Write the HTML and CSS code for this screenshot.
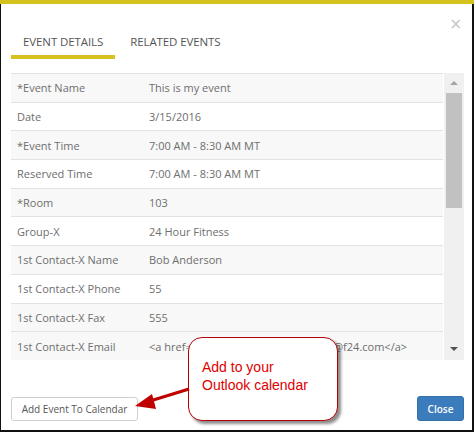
FILE: index.html
```html
<!DOCTYPE html>
<html>
<head>
<meta charset="utf-8">
<link rel="stylesheet" href="styles.css">
</head>
<body>
<div class="modal">
  <div class="topbar"></div>
  <div class="frame">
    <div class="close-row"><span class="close-x">×</span></div>
    <div class="tabs">
      <div class="tab active">EVENT DETAILS</div>
      <div class="tab">RELATED EVENTS</div>
    </div>
    <div class="table-wrap">
      <div class="rows">
        <div class="row odd"><span class="label">*Event Name</span><span class="value">This is my event</span></div>
        <div class="row"><span class="label">Date</span><span class="value">3/15/2016</span></div>
        <div class="row odd"><span class="label">*Event Time</span><span class="value">7:00 AM - 8:30 AM MT</span></div>
        <div class="row"><span class="label">Reserved Time</span><span class="value">7:00 AM - 8:30 AM MT</span></div>
        <div class="row odd"><span class="label">*Room</span><span class="value">103</span></div>
        <div class="row"><span class="label">Group-X</span><span class="value">24 Hour Fitness</span></div>
        <div class="row odd"><span class="label">1st Contact-X Name</span><span class="value">Bob Anderson</span></div>
        <div class="row"><span class="label">1st Contact-X Phone</span><span class="value">55</span></div>
        <div class="row odd"><span class="label">1st Contact-X Fax</span><span class="value">555</span></div>
        <div class="row odd"><span class="label">1st Contact-X Email</span><span class="value">&lt;a href="mailto:bob@f24.com"&gt;bob@f24.com&lt;/a&gt;</span></div>
      </div>
      <div class="scrollbar">
        <div class="sb-arrow up"></div>
        <div class="sb-thumb"></div>
        <div class="sb-arrow down"></div>
      </div>
    </div>
    <div class="footer">
      <button class="btn-add">Add Event To Calendar</button>
      <button class="btn-close">Close</button>
    </div>
  </div>
  <div class="callout">Add to your<br>Outlook calendar</div>
  <svg class="arrow" width="474" height="433" viewBox="0 0 474 433">
    <line x1="189" y1="389" x2="150" y2="401" stroke="#c00000" stroke-width="3"/>
    <polygon points="135,406 152,394 156,409" fill="#c00000"/>
  </svg>
</div>
</body>
</html>
```
FILE: styles.css
```css
html, body {
  margin: 0;
  padding: 0;
  background: #ffffff;
}
body {
  width: 474px;
  height: 433px;
  overflow: hidden;
  font-family: "Open Sans", "DejaVu Sans", sans-serif;
}
.modal {
  position: relative;
  width: 474px;
  height: 433px;
}
.topbar {
  height: 4px;
  background: #d5c21e;
}
.frame {
  box-sizing: border-box;
  height: 428px;
  border-left: 1px solid #111;
  border-right: 2px solid #111;
  border-bottom: 2px solid #111;
  padding: 0 8px 0 10px;
  display: flex;
  flex-direction: column;
}
.close-row {
  height: 26px;
  display: flex;
  justify-content: flex-end;
  align-items: center;
  padding-right: 2px;
}
.close-x {
  color: #c4c4c4;
  font-size: 15px;
  line-height: 15px;
  font-family: "DejaVu Sans", sans-serif;
  margin-top: 15px;
}
.tabs {
  display: flex;
  gap: 3px;
  padding-top: 4px;
}
.tab {
  font-size: 11.5px;
  line-height: 16px;
  color: #555;
  padding: 0 12px 5px;
  border-bottom: 4px solid transparent;
  letter-spacing: -0.1px;
}
.tab.active {
  border-bottom-color: #d5c21e;
}
.table-wrap {
  margin-top: 14px;
  display: flex;
  gap: 1px;
  height: 287px;
}
.rows {
  width: 432px;
  overflow: hidden;
}
.row {
  box-sizing: border-box;
  height: 28.7px;
  border-top: 1px solid #e2e2e2;
  display: flex;
  align-items: center;
  font-size: 11px;
  color: #6e6e6e;
  white-space: nowrap;
  background: #fff;
}
.row.odd {
  background: #f8f8f8;
}
.label {
  width: 132px;
  padding-left: 6px;
  flex: none;
}
.value {
  flex: none;
}
.scrollbar {
  width: 20px;
  background: #f0f0f0;
  position: relative;
}
.sb-thumb {
  position: absolute;
  left: 2px;
  width: 16px;
  top: 20px;
  height: 115px;
  background: #c1c1c1;
}
.sb-arrow {
  position: absolute;
  left: 6px;
  width: 0;
  height: 0;
  border-left: 4px solid transparent;
  border-right: 4px solid transparent;
}
.sb-arrow.up {
  top: 8px;
  border-bottom: 4px solid #a3a3a3;
}
.sb-arrow.down {
  bottom: 9px;
  border-top: 4px solid #505050;
}
.footer {
  margin-top: 36px;
  display: flex;
  justify-content: space-between;
  align-items: center;
}
.btn-add {
  box-sizing: border-box;
  width: 127px;
  height: 24px;
  background: #fff;
  border: 1px solid #cfcfcf;
  border-radius: 3px;
  font-family: "Open Sans", sans-serif;
  font-size: 10px;
  color: #555;
  padding: 0;
}
.btn-close {
  box-sizing: border-box;
  width: 47px;
  height: 25px;
  background: #3b7cbc;
  border: 1px solid #336fa9;
  border-radius: 3px;
  font-family: "Open Sans", sans-serif;
  font-weight: 600;
  font-size: 10px;
  color: #fff;
  padding: 0;
}
.callout {
  position: absolute;
  left: 188px;
  top: 337px;
  box-sizing: border-box;
  width: 150px;
  height: 84px;
  background: #fff;
  border: 1.5px solid #b40000;
  border-radius: 14px;
  box-shadow: 3px 3px 3px rgba(0,0,0,0.45);
  padding: 20px 0 0 13px;
  font-family: "Liberation Sans", Arial, sans-serif;
  font-size: 14px;
  line-height: 18px;
  color: #e00000;
}
.arrow {
  position: absolute;
  left: 0;
  top: 0;
  pointer-events: none;
}
```
